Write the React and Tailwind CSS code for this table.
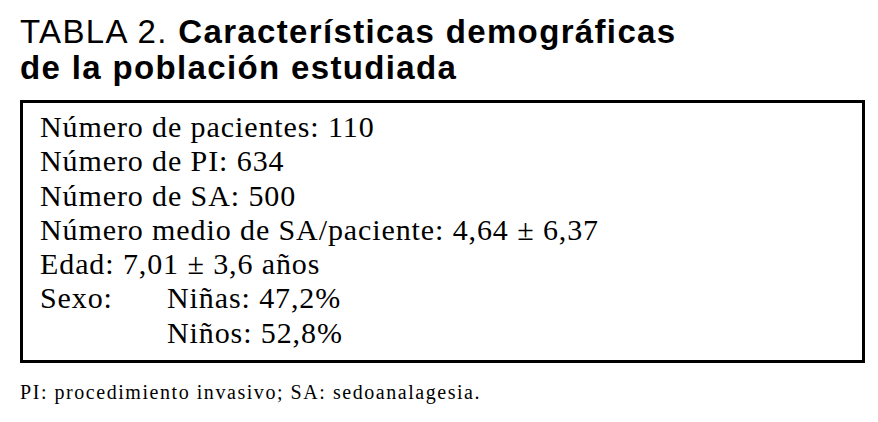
export default function App() {
  const rows = [
    "Número de pacientes: 110",
    "Número de PI: 634",
    "Número de SA: 500",
    "Número medio de SA/paciente: 4,64 ± 6,37",
    "Edad: 7,01 ± 3,6 años",
  ];

  return (
    <div className="w-[878px] h-[422px] bg-white text-black pl-5 pt-[14px]">
      <h1 className="font-['Liberation_Sans',Arial,sans-serif] text-[33px] leading-[36px] tracking-[1.35px]">
        TABLA 2. <span className="font-bold">Características demográficas</span>
        <br />
        <span className="font-bold">de la población estudiada</span>
      </h1>

      <div className="mt-[14px] w-[845px] h-[263px] border-[3px] border-black pl-[17px] pt-[7px] font-['Liberation_Serif','Times_New_Roman',serif] text-[30px] leading-[34.3px] tracking-[0.9px]">
        {rows.map((r) => (
          <div key={r}>{r}</div>
        ))}
        <div className="flex">
          <span className="w-[127px]">Sexo:</span>
          <span>Niñas: 47,2%</span>
        </div>
        <div className="flex">
          <span className="w-[127px]"></span>
          <span>Niños: 52,8%</span>
        </div>
      </div>

      <p className="mt-[17px] font-['Liberation_Serif','Times_New_Roman',serif] text-[20px] leading-[24px] tracking-[1.55px]">
        PI: procedimiento invasivo; SA: sedoanalagesia.
      </p>
    </div>
  );
}
